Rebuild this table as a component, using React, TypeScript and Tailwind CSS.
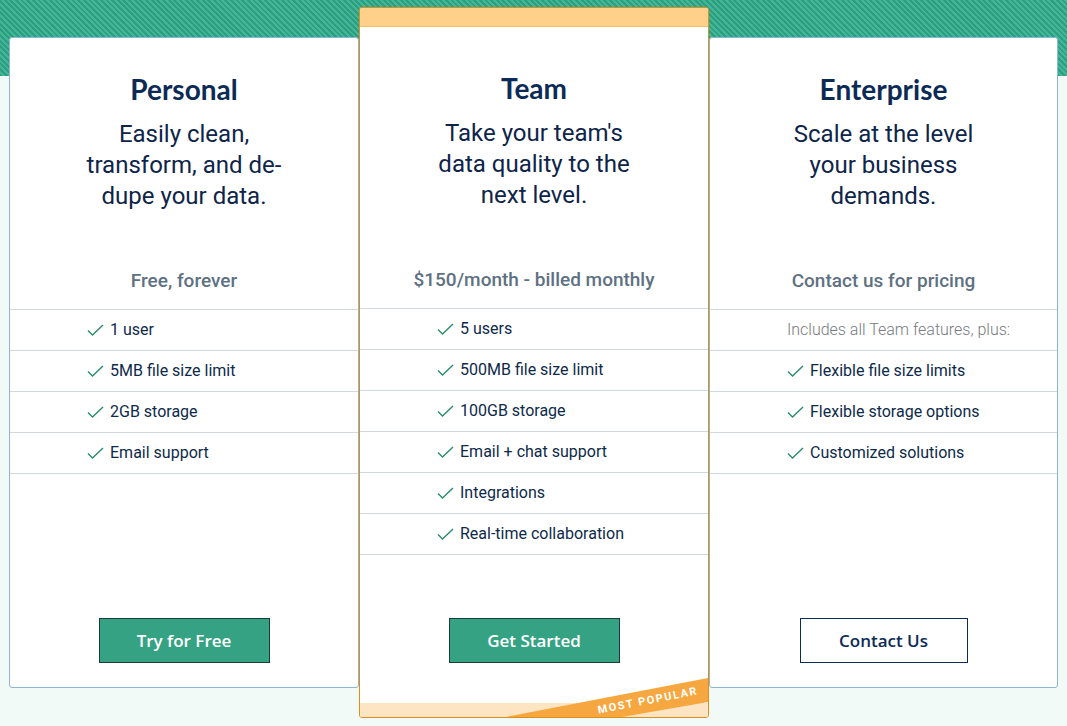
import * as React from "react";

type Plan = {
  name: string;
  blurb: string;
  price: string;
  note?: string;
  features: string[];
  cta: string;
  primary: boolean;
};

const plans: Plan[] = [
  {
    name: "Personal",
    blurb: "Easily clean, transform, and de-dupe your data.",
    price: "Free, forever",
    features: ["1 user", "5MB file size limit", "2GB storage", "Email support"],
    cta: "Try for Free",
    primary: true,
  },
  {
    name: "Team",
    blurb: "Take your team's data quality to the next level.",
    price: "$150/month - billed monthly",
    features: [
      "5 users",
      "500MB file size limit",
      "100GB storage",
      "Email + chat support",
      "Integrations",
      "Real-time collaboration",
    ],
    cta: "Get Started",
    primary: true,
  },
  {
    name: "Enterprise",
    blurb: "Scale at the level your business demands.",
    price: "Contact us for pricing",
    note: "Includes all Team features, plus:",
    features: ["Flexible file size limits", "Flexible storage options", "Customized solutions"],
    cta: "Contact Us",
    primary: false,
  },
];

const Check = () => (
  <svg width="17" height="12" viewBox="0 0 17 12" fill="none" className="shrink-0">
    <polyline points="1,6.5 5.5,11 16,1" stroke="#2b8c6c" strokeWidth="1.4" />
  </svg>
);

function PlanBody({ plan }: { plan: Plan }) {
  return (
    <>
      {/* heading area */}
      <div className="flex h-[271px] flex-col items-center pt-[34px] text-center">
        <h2 className="font-['Lato',sans-serif] text-[28px] font-bold leading-[34px] text-[#0c2a56]">
          {plan.name}
        </h2>
        <p className="mt-[13px] h-[93px] w-[210px] font-['Roboto',sans-serif] text-[24px] leading-[31px] text-[#0e2449]">
          {plan.blurb}
        </p>
        <div className="mt-[57px] font-['Roboto',sans-serif] text-[19px] font-medium leading-[24px] text-[#5e7182]">
          {plan.price}
        </div>
      </div>
      <ul className="border-t border-[#d3d8dc] font-['Roboto',sans-serif] text-[16px] text-[#0e2a4a]">
        {plan.note && (
          <li className="flex h-[41px] items-center border-b border-[#d3d8dc] pl-[77px] font-light text-[#777b80]">
            {plan.note}
          </li>
        )}
        {plan.features.map((f) => (
          <li key={f} className="flex h-[41px] items-center gap-[6px] border-b border-[#d3d8dc] pl-[77px]">
            <Check />
            <span>{f}</span>
          </li>
        ))}
      </ul>
      <div className="mt-auto flex justify-center">
        {plan.primary ? (
          <button className="h-[45px] w-[171px] border border-[#1d3b38] bg-[#35a383] font-['Open_Sans',sans-serif] text-[17px] font-semibold text-white">
            {plan.cta}
          </button>
        ) : (
          <button className="h-[45px] w-[168px] border border-[#0c2a56] bg-white font-['Open_Sans',sans-serif] text-[17px] font-semibold text-[#0c2a56]">
            {plan.cta}
          </button>
        )}
      </div>
    </>
  );
}

export default function App() {
  const [personal, team, enterprise] = plans;

  return (
    <div className="h-[726px] w-[1067px] overflow-hidden bg-[#f1faf6] bg-[repeating-linear-gradient(45deg,#2e9e81_0px,#2e9e81_2px,#44b698_2px,#44b698_4px)] bg-[length:100%_76px] bg-no-repeat">
      <div className="flex items-start pl-[9px] pt-[7px]">
        <div className="mt-[30px] flex h-[651px] w-[350px] flex-col rounded-[3px] border border-[#8fb6d0] bg-white pb-[24px]">
          <PlanBody plan={personal} />
        </div>

        <div className="relative z-10 flex h-[711px] w-[350px] flex-col overflow-hidden rounded-[3px] border border-[#d98f1d] bg-white">
          <div className="h-[19px] shrink-0 border-b border-[#f3bd6c] bg-[#ffd08a]" />
          <div className="flex flex-1 flex-col pt-[10px]">
            <PlanBody plan={team} />
            <div className="h-[40px] shrink-0" />
            <div className="h-[14px] shrink-0 bg-[#fde5c3]" />
          </div>
          {/* most popular ribbon */}
          <svg className="absolute bottom-0 right-0" width="205" height="40" viewBox="0 0 205 40">
            <polygon points="3,40 205,1 205,25 119,40" fill="#f6a73f" />
          </svg>
          <span className="absolute bottom-[8px] right-[9px] origin-center -rotate-[11deg] font-['Roboto',sans-serif] text-[11px] font-bold tracking-[1.6px] text-white">
            MOST POPULAR
          </span>
        </div>

        <div className="mt-[30px] flex h-[651px] w-[349px] flex-col rounded-[3px] border border-[#8fb6d0] bg-white pb-[24px]">
          <PlanBody plan={enterprise} />
        </div>
      </div>
    </div>
  );
}
